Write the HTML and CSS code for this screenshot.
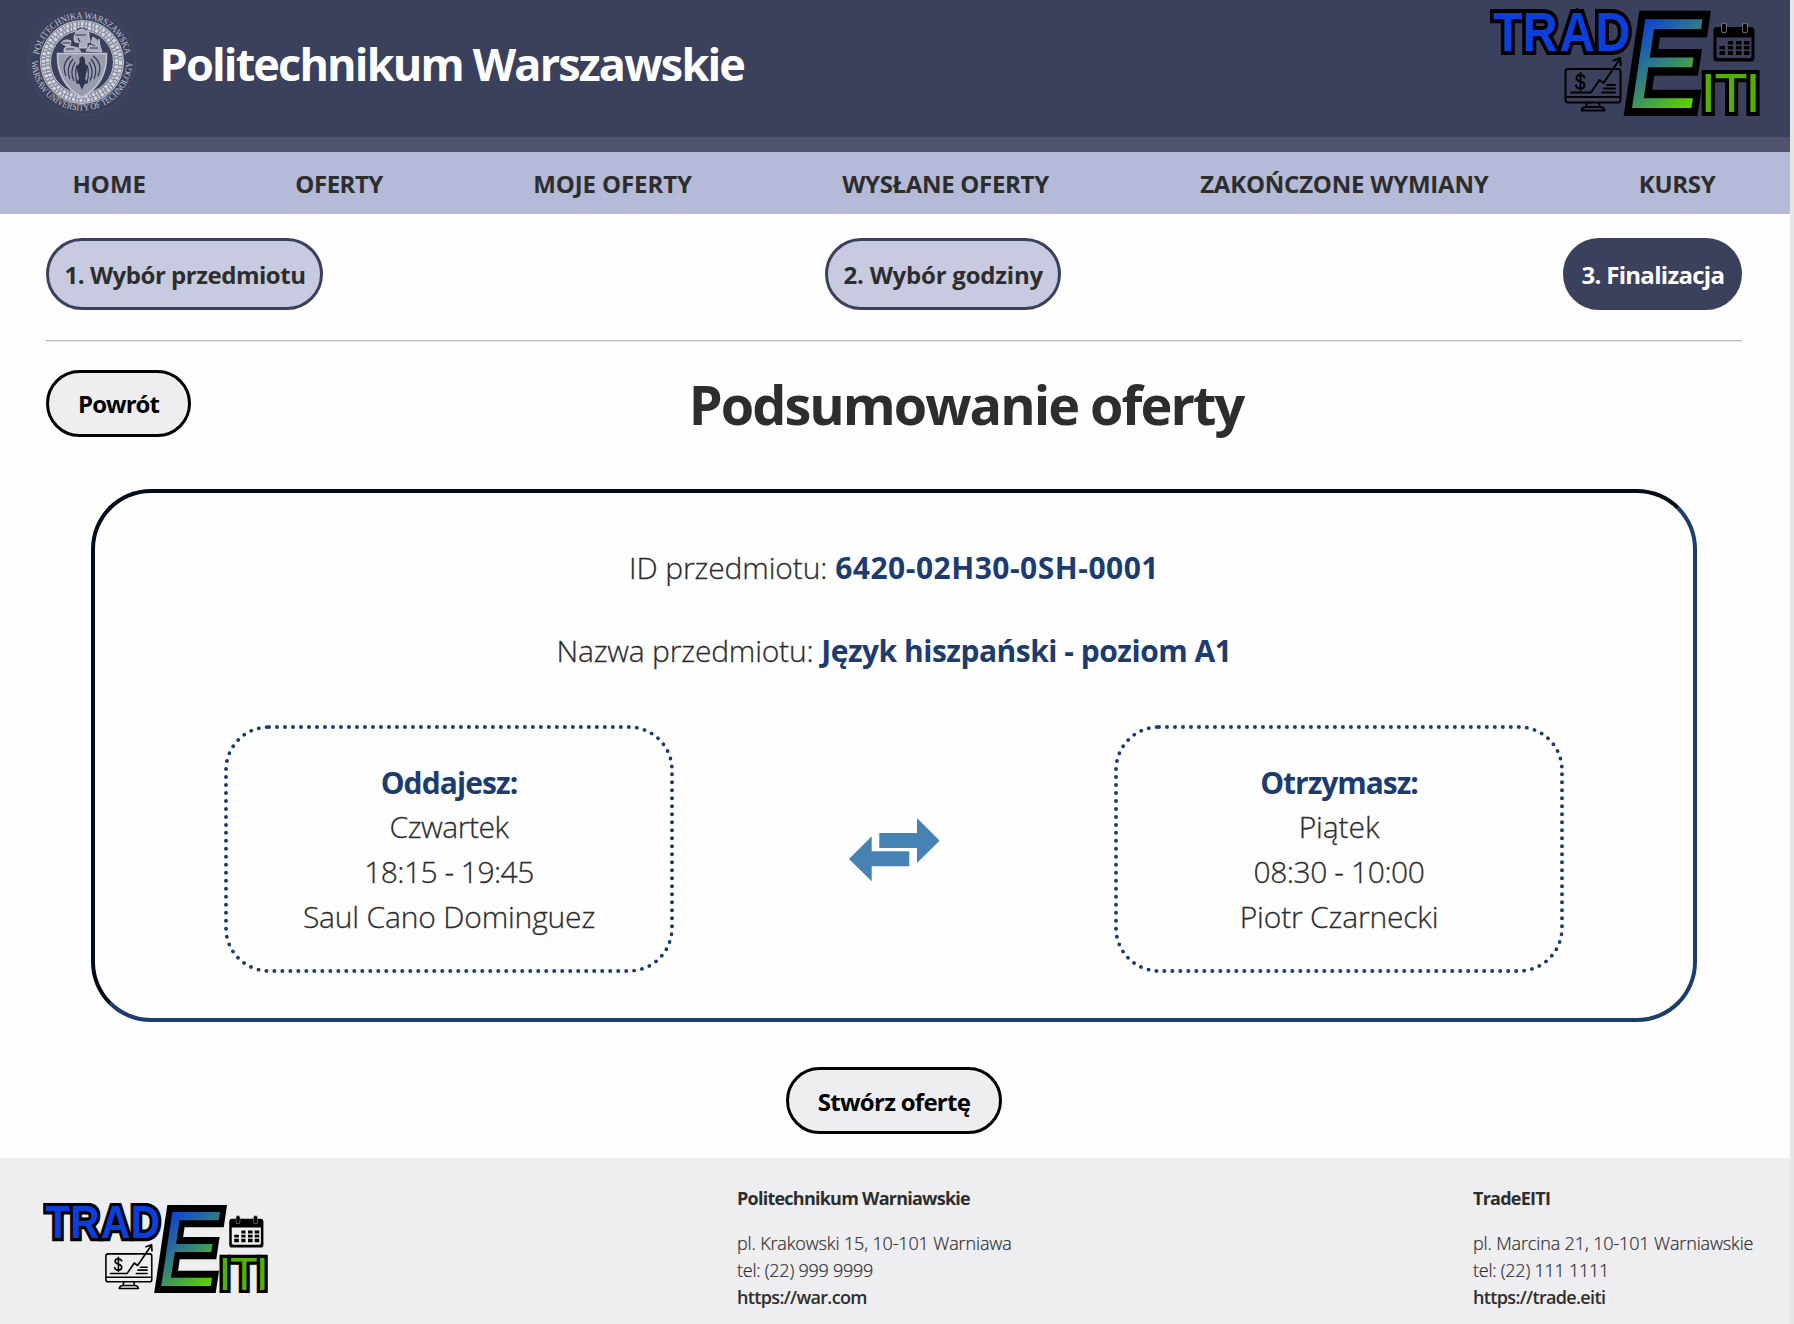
FILE: index.html
```html
<!DOCTYPE html>
<html lang="pl">
<head>
<meta charset="utf-8">
<title>TradeEITI – Podsumowanie oferty</title>
<link rel="stylesheet" href="styles.css">
</head>
<body>
<svg class="defs" aria-hidden="true">
  <defs>
    <linearGradient id="eFill" gradientUnits="userSpaceOnUse" x1="6" y1="-88" x2="78" y2="-6">
      <stop offset="0" stop-color="#0a3fdc"/>
      <stop offset=".5" stop-color="#33807c"/>
      <stop offset="1" stop-color="#5ad200"/>
    </linearGradient>
    <symbol id="logo" viewBox="0 0 270 108">
      <g transform="scale(.87 1)">
        <text class="logo-text trad" y="42.500" x="3.500 37.500 80 121">TRAD</text>
      </g>
      <text class="logo-text eiti" y="104" x="210.5 224.4 255.2">ITI</text>
      <g transform="translate(133 100) skewX(-8.5) scale(.85 1)">
        <text class="logo-text big-e" x="0" y="0">E</text>
        <text class="big-e-fill" x="0" y="0">E</text>
      </g>
      <!-- calendar -->
      <path d="M227 19h34a3.5 3.5 0 0 1 3.500 3.500V50a3.500 3.500 0 0 1-3.500 3.500h-34a3.500 3.500 0 0 1-3.500-3.500V22.500a3.500 3.500 0 0 1 3.500-3.500zM226.500 29.500V48q0 2 2 2h31q2 0 2-2V29.500z" fill-rule="evenodd"/>
      <path d="M234 17.500v5M255 17.500v5" class="ring-gap"/>
      <path d="M234 17.500v5M255 17.500v5" class="ring"/>
      <path d="M238 33h5v3.500h-5zM246 33h5.500v3.500H246zM254 33h5.500v3.500H254zM229.500 38h5.500v3.500h-5.500zM238 38h5v3.500h-5zM246 38h5.500v3.500H246zM254 38h5.500v3.500H254zM229.500 43h5.500v4h-5.500zM238 43h5v4h-5zM246 43h5.500v4H246zM254 43h5.500v4H254z"/>
      <!-- monitor with a chart -->
      <g class="line-art">
        <path d="M78 61h50q2.500 0 2.500 2.500V92q0 2.500-2.500 2.500H78q-2.500 0-2.500-2.500V63.500Q75.500 61 78 61zM76 89h54M97 95l-1 4h14l-1-4M96 99q-4 0-4.500 3.500h23Q114 99 110 99z"/>
        <path d="M81 84.500h20l8.500-12.500 4 3L130 51M123.500 52.500l6.800-2.500.5 7.500M117 77h8M114 80.500h11M112 84.500h13"/>
        <path d="M94.500 69.500q-1-2.500-4-2.500-4 0-4 3 0 2.500 4 3.500t4 3.500q0 3.500-4 3.500t-4.500-3M90.500 65v17"/>
      </g>
    </symbol>
  </defs>
</svg>

<header class="header">
  <svg class="emblem" viewBox="0 0 108 108" aria-label="Politechnika Warszawska">
    <defs>
      <path id="arcTop" d="M10.500 54a43.500 43.500 0 0 1 87 0"/>
      <path id="arcBottom" d="M3.500 52a50.500 50.500 0 0 0 101 0"/>
    </defs>
    <circle class="em-edge" cx="54" cy="54" r="53.500"/>
    <text class="em-text"><textPath href="#arcTop" startOffset="7" textLength="122" lengthAdjust="spacingAndGlyphs">POLITECHNIKA WARSZAWSKA</textPath></text>
    <text class="em-text"><textPath href="#arcBottom" startOffset="1" textLength="155" lengthAdjust="spacingAndGlyphs">WARSAW UNIVERSITY OF TECHNOLOGY</textPath></text>
    <circle class="em-ring" cx="54" cy="54" r="36.500"/>
    <circle class="em-braid" cx="54" cy="54" r="38.500"/>
    <circle class="em-braid em-braid-in" cx="54" cy="54" r="34.500"/>
    <circle class="em-line" cx="54" cy="54" r="41.500"/>
    <circle class="em-line" cx="54" cy="54" r="31.500"/>
    <path class="em-shield" d="M29.500 45.500h49q1 30-24.500 44Q28.500 75.500 29.500 45.500z"/>
    <path class="em-feather" d="M43 48c-8 6-8 13-5 20M45 51c-6 7-6 13-3 20M47 54c-4 7-4 13-1 19M49 57c-2 6-2 11 0 17M65 48c8 6 8 13 5 20M63 51c6 7 6 13 3 20M61 54c4 7 4 13 1 19M59 57c2 6 2 11 0 17"/>
    <path class="em-eagle" d="M51.500 50l3-2 2.500 3v4l2.500 4-2.500 12 3.500 4-4 1-2.500 6-2.500-6-4-1 3.500-4-2.500-12 3-4z"/>
    <path class="em-figure" d="M46 31q0-9 8-10 8 0 7 7l1 6-3 1v5h-8l1-6q-6 2-6-3zM33 35q4-5 10-2l-1 4q-5 2-9-2zM36 44q-1-6 6-6l8 2 3 4zM58 43l4-6 5 2 4-8 1 7 2 6zM65 29l4 3-2 5-4-2z"/>
    <path class="em-feather" d="M49 22q5-4 10 0M47 27h11M50 30l2 4M34 35h8M38 41h8M62 40h8"/>
  </svg>
  <h1 class="brand">Politechnikum Warszawskie</h1>
  <svg class="logo-header"><use href="#logo"/></svg>
</header>

<nav class="nav">
  <a class="n-home">HOME</a>
  <a class="n-offers">OFERTY</a>
  <a class="n-mine">MOJE OFERTY</a>
  <a class="n-sent">WYSŁANE OFERTY</a>
  <a class="n-done">ZAKOŃCZONE WYMIANY</a>
  <a class="n-courses">KURSY</a>
</nav>

<main class="main">
  <div class="steps">
    <div class="step step-1">1. Wybór przedmiotu</div>
    <div class="step step-2">2. Wybór godziny</div>
    <div class="step step-3">3. Finalizacja</div>
  </div>
  <hr class="rule">
  <div class="title-row">
    <button class="btn btn-back">Powrót</button>
    <h2 class="title">Podsumowanie oferty</h2>
  </div>

  <section class="panel">
    <p class="field"><span class="k-id">ID przedmiotu:</span> <b class="v-id">6420-02H30-0SH-0001</b></p>
    <p class="field"><span class="k-name">Nazwa przedmiotu:</span> <b class="v-name">Język hiszpański - poziom A1</b></p>
    <div class="swap">
      <div class="slot">
        <b class="s-head">Oddajesz:</b>
        <span class="s-day">Czwartek</span>
        <span class="s-time">18:15 - 19:45</span>
        <span class="s-name">Saul Cano Dominguez</span>
      </div>
      <svg class="arrows" viewBox="0 0 90.600 63.400">
        <path d="M30.300 15H68V0l22.600 22.700L68 45V30H30.300zM60.300 33.300v15H22.700v15L0 41l22.700-22.700v15z"/>
      </svg>
      <div class="slot">
        <b class="s-head s-head-get">Otrzymasz:</b>
        <span class="s-day-get">Piątek</span>
        <span class="s-time-get">08:30 - 10:00</span>
        <span class="s-name">Piotr Czarnecki</span>
      </div>
    </div>
  </section>

  <button class="btn btn-create">Stwórz ofertę</button>
</main>

<footer class="footer">
  <svg class="logo-footer"><use href="#logo"/></svg>
  <div class="contact">
    <b class="c-name">Politechnikum Warniawskie</b>
    <span>pl. Krakowski 15, 10-101 Warniawa</span>
    <span class="c-tel">tel: (22) 999 9999</span>
    <a>https://war.com</a>
  </div>
  <div class="contact">
    <b class="c-name">TradeEITI</b>
    <span>pl. Marcina 21, 10-101 Warniawskie</span>
    <span class="c-tel">tel: (22) 111 1111</span>
    <a>https://trade.eiti</a>
  </div>
</footer>
</body>
</html>
```
FILE: styles.css
```css
* { box-sizing: border-box; }

html { background: #e6e6e6; }

body {
  margin: 0 4px 0 0;
  height: 1324px;
  overflow: hidden;
  background: #fefefe;
  color: #2d2d2d;
  font-family: "Open Sans", "Noto Sans", sans-serif;
  font-weight: 300;
}

h1, h2, p { margin: 0; }

.defs { display: block; width: 0; height: 0; }

/* header */
.header {
  display: flex;
  align-items: flex-start;
  height: 152px;
  padding: 8px 30px 0 28px;
  background: #3b415c;
  border-bottom: 15px solid #4f536d;
}
.emblem { width: 108px; height: 108px; }
.brand {
  flex: 1;
  padding: 26px 0 0 23.5px;
  color: #fff;
  font-size: 45px;
  line-height: 60px;
  font-weight: 700;
  letter-spacing: -1.85px;
}
.logo-header { width: 270px; height: 108px; }

.em-edge { fill: none; stroke: #474d68; stroke-width: .7; }
.em-text { font: 400 9.4px "Liberation Serif", serif; fill: #c3c5d1; }
.em-ring { fill: none; stroke: #858a9d; stroke-width: 9.5; }
.em-braid { fill: none; stroke: #d4d6de; stroke-width: 3.4; stroke-dasharray: 3 1.6 1.5 1.4; }
.em-braid-in { stroke-dashoffset: 4; }
.em-line { fill: none; stroke: #c5c8d3; stroke-width: 1; }
.em-shield { fill: #989cad; stroke: #c3c6d1; stroke-width: 1.5; }
.em-eagle { fill: #30354e; }
.em-feather { fill: none; stroke: #30354e; stroke-width: 1.2; }
.em-figure { fill: #a9adbb; stroke: #d0d2da; stroke-width: .8; }

/* logo artwork */
.logo-text {
  font-family: "Liberation Sans", Arial, sans-serif;
  stroke: #000;
  stroke-linejoin: miter;
  paint-order: stroke;
}
.trad { font-size: 56px; font-weight: 700; fill: #0a3fdc; stroke-width: 8px; }
.eiti { font-size: 56px; fill: #53b000; stroke-width: 8px; }
.big-e { font-size: 129px; stroke-width: 17px; }
.big-e-fill { font: 129px "Liberation Sans", Arial, sans-serif; fill: url(#eFill); }
.ring-gap { fill: none; stroke: #8c8f9c; stroke-width: 5.4; stroke-linecap: round; }
.ring { fill: none; stroke: #000; stroke-width: 4; stroke-linecap: round; }
.line-art path { fill: none; stroke: #000; stroke-width: 1.9; stroke-linejoin: round; stroke-linecap: round; }

/* navigation */
.nav {
  display: flex;
  justify-content: space-between;
  height: 62px;
  padding: 14px 74.5px 12px 72.5px;
  background: #b4bad7;
  font-size: 24px;
  line-height: 36px;
  font-weight: 700;
}
.n-offers { margin: 0 1px 0 -1px; letter-spacing: -.49px; }
.n-mine { margin: 0 1px 0 -1px; letter-spacing: -.1px; }
.n-sent { margin: 0 1px 0 -1px; letter-spacing: -.32px; }
.n-done { letter-spacing: -.22px; }
.n-courses { letter-spacing: -.29px; }

/* content */
.main { padding: 24px 48px 24px 46px; }

.steps { display: flex; justify-content: space-between; }
.step {
  height: 72px;
  padding: 16px 0 0 15.5px;
  border: 3px solid #3b415c;
  border-radius: 36px;
  background: #c8cbe0;
  font-size: 24px;
  line-height: 36px;
  font-weight: 700;
  white-space: nowrap;
}
.step-1 { width: 277px; letter-spacing: -.47px; }
.step-2 { width: 236px; letter-spacing: -.22px; }
.step-3 { width: 179px; letter-spacing: -.7px; background: #3b415c; color: #fff; }

.rule {
  height: 2px;
  margin: 30px 0 28px;
  border: 0;
  border-top: 1px solid #bababa;
  background: #e9e9e9;
}

.title-row { display: flex; align-items: center; height: 67px; }
.title {
  flex: 1;
  padding: 2px 1px 0 0;
  text-align: center;
  font-size: 54px;
  line-height: 81px;
  font-weight: 700;
  letter-spacing: -1.98px;
}

.btn {
  display: block;
  height: 67px;
  padding: 1px 0 0;
  border: 3px solid #000;
  border-radius: 34px;
  background: #eeeef0;
  color: #000;
  font: 700 24px/36px "Open Sans", "Noto Sans", sans-serif;
}
.btn-back { width: 145px; letter-spacing: -.95px; }
.btn-create { width: 216px; margin: 45px auto 0; padding-top: 2px; letter-spacing: -.71px; }

.panel {
  width: 1606px;
  height: 533px;
  margin: 52px auto 0 45px;
  padding: 52px 129px 0;
  border: 4px solid #1c3c70;
  border-top-color: #030c1a;
  border-left-color: #030c1a;
  border-radius: 60px;
  font-size: 30px;
  line-height: 45px;
}
/* thickens the light weight slightly */
.panel span { -webkit-text-stroke: .3px currentColor; }
.panel b { color: #1c3c70; font-weight: 700; }
.field { margin-bottom: 38px; text-align: center; }
.k-id { letter-spacing: -.12px; }
.k-name { letter-spacing: -.2px; }
.v-id { letter-spacing: .5px; }
.v-name { letter-spacing: -.49px; }

.swap {
  display: flex;
  justify-content: space-between;
  align-items: center;
  margin-top: 52px;
}
.slot {
  display: flex;
  flex-direction: column;
  align-items: center;
  width: 450px;
  height: 248px;
  padding: 30px 0 0;
  border: 4px dotted #1c3c70;
  border-radius: 45px;
}
.slot .s-head { padding-top: 1px; margin-bottom: -1px; letter-spacing: -.92px; }
.slot .s-head-get { letter-spacing: -1.04px; }
.s-day { letter-spacing: -.46px; }
.s-day-get { letter-spacing: -.1px; }
.s-time { letter-spacing: -.53px; }
.s-time-get { letter-spacing: -.42px; }
.s-name { letter-spacing: -.18px; }
.arrows { width: 90.6px; height: 63.4px; margin-top: 1px; fill: #4682b4; }

/* footer */
.footer {
  display: grid;
  grid-template-columns: 694px 736px auto;
  height: 166px;
  padding: 27px 0 0 43px;
  background: #eeeef0;
  font-size: 18px;
  line-height: 27px;
}
.logo-footer { width: 225px; height: 90px; margin-top: 18px; }
.contact { display: flex; flex-direction: column; letter-spacing: -.14px; }
.contact span { -webkit-text-stroke: .2px currentColor; }
.contact .c-name { margin-bottom: 18px; font-weight: 700; letter-spacing: -.76px; }
.contact .c-tel { letter-spacing: -.25px; }
.contact a { font-weight: 600; letter-spacing: -.65px; }
```
